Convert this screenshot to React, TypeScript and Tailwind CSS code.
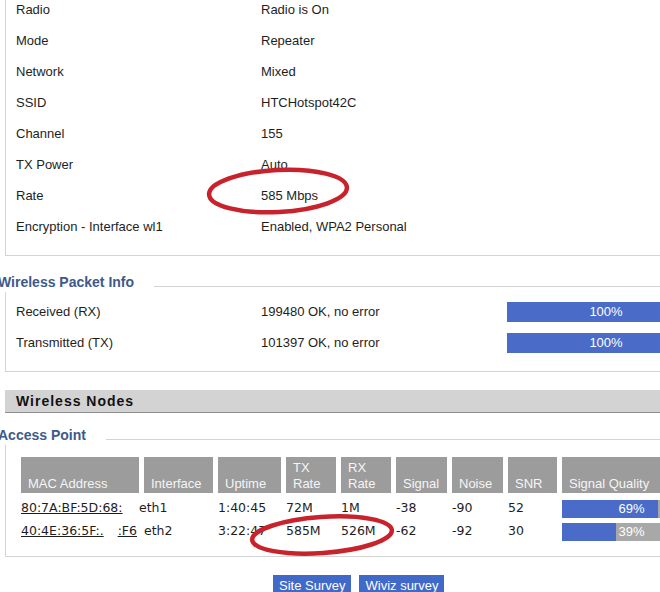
import React from 'react';

const radioRows = [
  ['Radio', 'Radio is On'],
  ['Mode', 'Repeater'],
  ['Network', 'Mixed'],
  ['SSID', 'HTCHotspot42C'],
  ['Channel', '155'],
  ['TX Power', 'Auto'],
  ['Rate', '585 Mbps'],
  ['Encryption - Interface wl1', 'Enabled, WPA2 Personal'],
];

const packetRows = [
  ['Received (RX)', '199480 OK, no error', '100%'],
  ['Transmitted (TX)', '101397 OK, no error', '100%'],
];

const nodeCols = 'grid grid-cols-[118px_69px_63px_50px_50px_51px_51px_49px_140px] gap-x-[5px]';

const nodes = [
  { mac: ['80:7A:BF:5D:68:'], iface: 'eth1', shift: true, uptime: '1:40:45', tx: '72M', rx: '1M', signal: '-38', noise: '-90', snr: '52', quality: 69 },
  { mac: ['40:4E:36:5F:.', ':F6'], iface: 'eth2', shift: false, uptime: '3:22:47', tx: '585M', rx: '526M', signal: '-62', noise: '-92', snr: '30', quality: 39 },
];

const SectionHeading: React.FC<{ title: string }> = ({ title }) => (
  <div className="flex h-[20px] items-start">
    <span className="ml-[-2px] mt-[2px] text-[14px] leading-[16px] font-bold text-[#3d5a8a]">{title}</span>
    <div className="ml-[20px] mt-[14px] h-px flex-1 bg-[#d4d4d4]" />
  </div>
);

const HeaderCell: React.FC<{ children: React.ReactNode }> = ({ children }) => (
  <div className="flex h-[36px] items-end overflow-hidden whitespace-nowrap bg-[#9c9c9c] pb-[1px] pl-[7px] text-[13px] leading-[16px] text-[#f5f5f5]">
    <span>{children}</span>
  </div>
);

export default function App() {
  return (
    <div className="relative h-[592px] w-[660px] overflow-hidden bg-white font-['Liberation_Sans',Arial,sans-serif] text-[#1e1e1e]">
      <div className="w-[780px]">
        {/* Radio status */}
        <div className="-mt-[6px] ml-[5px] border-b border-l border-[#d4d4d4] pb-[13px] pl-[10px]">
          {radioRows.map(([label, value]) => (
            <div key={label} className="grid h-[31px] grid-cols-[245px_246px_200px] items-center text-[13px]">
              <span>{label}</span>
              <span>{value}</span>
            </div>
          ))}
        </div>

        {/* Wireless Packet Info */}
        <div className="mt-[16px]">
          <SectionHeading title="Wireless Packet Info" />
          <div className="ml-[5px] border-b border-l border-[#d4d4d4] pb-[13px] pl-[10px] pt-[4px]">
            {packetRows.map(([label, value, pct]) => (
              <div key={label} className="grid h-[31px] grid-cols-[245px_246px_198px] items-center text-[13px]">
                <span>{label}</span>
                <span>{value}</span>
                <div className="h-[20px] bg-[#4a6cc8] text-center leading-[20px] text-white">{pct}</div>
              </div>
            ))}
          </div>
        </div>

        {/* Wireless Nodes bar */}
        <div className="ml-[5px] mt-[18px] flex h-[23px] items-center border-b border-[#8e8e8e] bg-[#d3d3d3] pl-[11px]">
          <span className="text-[14px] font-bold tracking-[1px] text-[#111]">Wireless Nodes</span>
        </div>

        {/* Access Point */}
        <div className="mt-[12px]">
          <SectionHeading title="Access Point" />
          <div className="ml-[5px] border-b border-l border-[#d4d4d4] pb-[13px] pl-[15px] pt-[12px]">
            <div className={nodeCols}>
              <HeaderCell>MAC Address</HeaderCell>
              <HeaderCell>Interface</HeaderCell>
              <HeaderCell>Uptime</HeaderCell>
              <HeaderCell>TX<br />Rate</HeaderCell>
              <HeaderCell>RX<br />Rate</HeaderCell>
              <HeaderCell>Signal</HeaderCell>
              <HeaderCell>Noise</HeaderCell>
              <HeaderCell>SNR</HeaderCell>
              <HeaderCell>Signal Quality</HeaderCell>
            </div>
            <div className="mt-[4px] font-['DejaVu_Sans',Verdana,sans-serif] text-[12.5px] text-[#1e1e1e]">
              {nodes.map((n) => (
                <div key={n.iface} className={`${nodeCols} h-[23px] items-center`}>
                  <span className="flex gap-[14px] whitespace-nowrap">
                    {n.mac.map((m) => (
                      <span key={m} className="underline">{m}</span>
                    ))}
                  </span>
                  <span className={n.shift ? '-ml-[5px]' : ''}>{n.iface}</span>
                  <span>{n.uptime}</span>
                  <span>{n.tx}</span>
                  <span>{n.rx}</span>
                  <span>{n.signal}</span>
                  <span>{n.noise}</span>
                  <span>{n.snr}</span>
                  <div className="relative h-[18px] w-[139px] bg-[#a8a8a8] font-['Liberation_Sans',Arial,sans-serif] text-[13px]">
                    <div className="h-full bg-[#4a6cc8]" style={{ width: `${n.quality}%` }} />
                    <span className="absolute inset-0 text-center leading-[18px] text-white">{n.quality}%</span>
                  </div>
                </div>
              ))}
            </div>
          </div>
        </div>

        {/* Buttons */}
        <div className="ml-[273px] mt-[18px] flex gap-[8px]">
          <button className="h-[22px] bg-[#4169c7] px-[6px] text-[13px] text-white">Site Survey</button>
          <button className="h-[22px] bg-[#4169c7] px-[6px] text-[13px] text-white">Wiviz survey</button>
        </div>
      </div>

      {/* red annotation circles */}
      <svg className="pointer-events-none absolute left-0 top-0" width="660" height="592" viewBox="0 0 660 592">
        <ellipse cx="278" cy="191" rx="69" ry="21" fill="none" stroke="#c8232c" strokeWidth="4.5" transform="rotate(-3 278 191)" />
        <ellipse cx="322" cy="535" rx="70" ry="18" fill="none" stroke="#c8232c" strokeWidth="4.5" transform="rotate(-4 322 535)" />
      </svg>
    </div>
  );
}
